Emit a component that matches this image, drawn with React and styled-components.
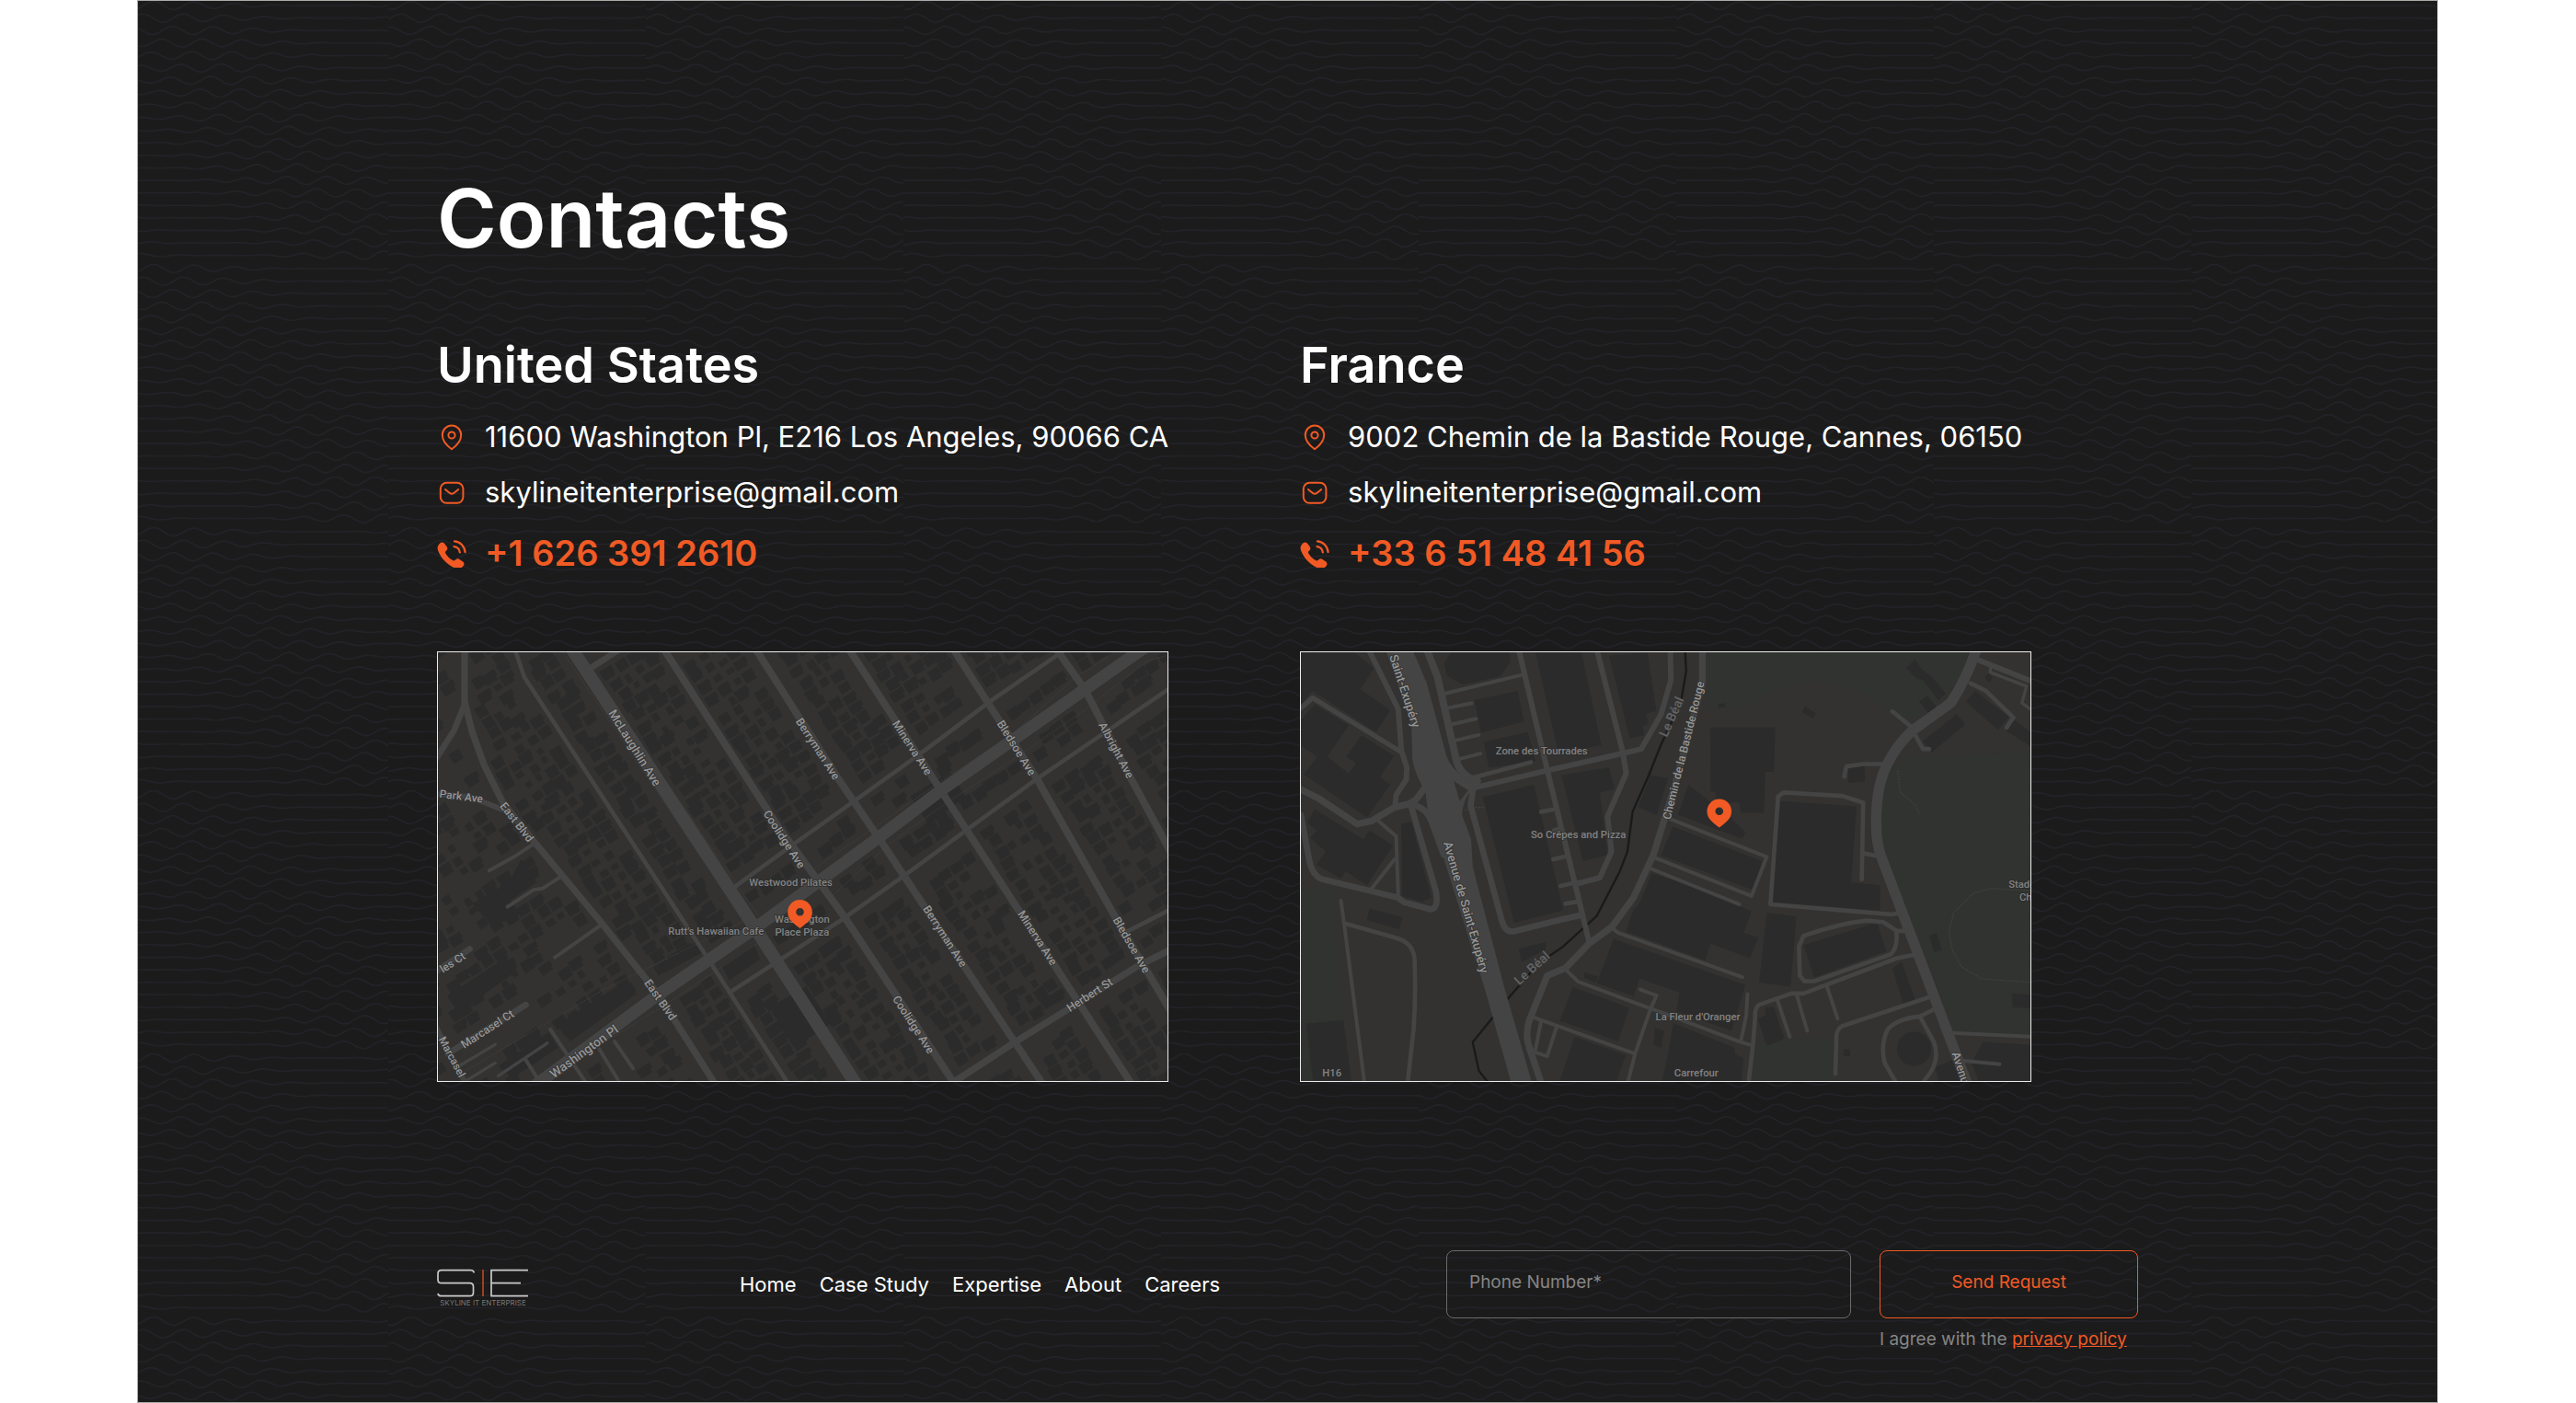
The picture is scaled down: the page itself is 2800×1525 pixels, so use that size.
import React from 'react'
import styled, { createGlobalStyle, ThemeProvider } from 'styled-components';

const theme = {
    colors: {
        background: '#1b1b1b',
        wave: '#222228',
        white: '#ffffff',
        accent: '#f15a24',
        muted: '#858585',
        border: '#6a6a6a',
        land: '#333230',
        building: '#2b2b2b',
        park: '#30332f',
        road: '#444444',
        water: '#191a1a',
    }
}

// one repeatable tile of the wavy backdrop
const TILE_W = 280;
const TILE_H = 286;

const waveTile = () => {
    let d = '';
    for (let row = 0; row < 21; row++) {
        const base = 5 + row * 13.58;
        const center = 26 + row * 12.6;
        const peak = 25 - row * 11.7;
        for (let x = 0; x <= TILE_W; x += 4) {
            const amp = 4.6 * Math.cos(Math.PI * (x - center) / 360) ** 2;
            const y = base - amp * Math.cos(2 * Math.PI * (x - peak) / 44);
            d += `${x === 0 ? 'M' : 'L'}${x} ${y.toFixed(1)}`;
        }
    }
    const svg = `<svg xmlns="http://www.w3.org/2000/svg" width="${TILE_W}" height="${TILE_H}"><path d="${d}" fill="none" stroke="${theme.colors.wave}" stroke-width="1.6"/></svg>`;
    return `url("data:image/svg+xml,${encodeURIComponent(svg)}")`;
}

const WAVES = waveTile();

/* ---------- United States map ---------- */

const usRoads = [
    { w: 42, p: [[450, 10], [1060, 940], [1390, 1450]] },
    { w: 14, p: [[266, 10], [300, 110], [900, 1030], [1170, 1450]] },
    { w: 24, p: [[750, 10], [1130, 600], [1270, 790], [1350, 900], [1712, 1450]] },
    { w: 24, p: [[1050, 10], [1330, 450], [1460, 640], [1900, 1300], [2000, 1450]] },
    { w: 24, p: [[1354, 10], [1660, 480], [2290, 1450]] },
    { w: 24, p: [[1695, 10], [1975, 445], [2250, 930], [2410, 1200]] },
    { w: 24, p: [[2030, 10], [2130, 150], [2280, 440], [2410, 680]] },
    { w: 40, p: [[2330, 10], [1660, 480], [1455, 635], [1060, 925], [740, 1145], [340, 1440]] },
    { w: 14, p: [[2060, 25], [1820, 190], [1580, 370], [1370, 520], [1180, 655], [980, 800]] },
    { w: 14, p: [[2410, 145], [1970, 445], [1750, 605], [1545, 755], [1340, 900], [970, 1140]] },
    { w: 22, p: [[2410, 1000], [2300, 1055], [1905, 1300], [1690, 1440]] },
    { w: 14, p: [[2250, 950], [2410, 868]] },
    { w: 20, p: [[510, 85], [610, 20]] },
    { w: 22, p: [[105, 10], [105, 190], [130, 290], [170, 400], [230, 520], [330, 645], [430, 765], [550, 910], [740, 1150], [930, 1450]] },
    { w: 20, p: [[105, 200], [70, 285], [10, 380]] },
    { w: 18, p: [[10, 492], [120, 500], [235, 545]] },
    { w: 12, p: [[185, 742], [270, 695], [330, 655]] },
    { w: 12, p: [[245, 860], [330, 805], [360, 800], [425, 758]] },
    { w: 12, p: [[400, 1025], [550, 920]] },
    { w: 20, p: [[10, 1072], [122, 998]] },
    { w: 20, p: [[50, 1340], [305, 1180]] },
    { w: 18, p: [[10, 1250], [115, 1450]] },
    { w: 10, p: [[90, 1378], [205, 1310]] },
    { w: 10, p: [[110, 1428], [205, 1370]] },
    { w: 10, p: [[215, 1412], [375, 1305]] },
    { w: 12, p: [[305, 1360], [355, 1440]] },
    { w: 12, p: [[385, 1260], [505, 1440]] },
    { w: 12, p: [[545, 1325], [615, 1440]] },
    { w: 12, p: [[595, 1300], [655, 1388]] },
];

const usPaths = [
    'M425 27L1030 925M510 85L1065 890M1090 975L1400 1440',
    'M100 1400L560 1130L1030 900M340 1440L760 1180L1060 980',
    'M1240 740L1430 610L1660 450L1890 300L2100 110L2210 40',
    'M1300 830L1490 655L1680 520L1910 370L2140 210L2330 60L2395 40',
];

const usBlocks = [
    '130,850 250,780 290,705 340,780 255,840 280,880 200,928',
    '48,1152 240,1025 275,1070 85,1205',
    '408,1245 635,1100 665,1145 450,1300',
    '740,1050 860,975 880,1010 760,1075',
    '945,1055 1050,985 1070,1030 970,1100',
    '215,1380 380,1270 410,1320 260,1420',
    '1100,1190 1180,1320 1300,1240 1220,1120',
    '1620,590 1560,500 1690,420 1740,500',
];

const usLabels = [
    ['McLaughlin Ave', 659, 342, 58, 40],
    ['Park Ave', 94, 500, 7, 36],
    ['East Blvd', 275, 584, 52, 37],
    ['East Blvd', 744, 1164, 55, 37],
    ['les Ct', 66, 1042, -33, 36],
    ['Marcasel Ct', 180, 1260, -33, 37],
    ['Marcasel', 64, 1350, 62, 35],
    ['Washington Pl', 496, 1334, -36, 41],
    ['Coolidge Ave', 1148, 640, 57, 37],
    ['Berryman Ave', 1258, 345, 57, 37],
    ['Minerva Ave', 1566, 341, 57, 37],
    ['Bledsoe Ave', 1906, 342, 58, 37],
    ['Albright Ave', 2232, 349, 62, 37],
    ['Berryman Ave', 1673, 957, 57, 37],
    ['Minerva Ave', 1975, 962, 57, 37],
    ['Bledsoe Ave', 2282, 985, 60, 37],
    ['Coolidge Ave', 1570, 1245, 57, 37],
    ['Herbert St', 2146, 1148, -33, 37],
];

const usPlaces = [
    ['Westwood Pilates', 1170, 791],
    ["Rutt's Hawaiian Cafe", 926, 952],
    ['Washington', 1207, 912],
    ['Place Plaza', 1207, 954],
];

// distance from a point to the edge of the nearest road
const roadGap = (x, y) => {
    let best = Infinity;
    usRoads.forEach(({ w, p }) => {
        for (let i = 1; i < p.length; i++) {
            const [ax, ay] = p[i - 1];
            const [bx, by] = p[i];
            const dx = bx - ax;
            const dy = by - ay;
            const t = Math.max(0, Math.min(1, ((x - ax) * dx + (y - ay) * dy) / (dx * dx + dy * dy)));
            best = Math.min(best, Math.hypot(x - ax - t * dx, y - ay - t * dy) - w / 2);
        }
    });
    return best;
}

const makeHouses = () => {
    let seed = 7;
    const rnd = () => {
        seed = (seed * 16807) % 2147483647;
        return seed / 2147483647;
    };
    const a = 57 * Math.PI / 180;
    let d = '';
    for (let v = -1500; v < 2100; v += 47) {
        for (let u = -100; u < 2700; u += 41) {
            const ju = u + rnd() * 14;
            const jv = v + rnd() * 14;
            const x = ju * Math.cos(a) + jv * Math.sin(a);
            const y = ju * Math.sin(a) - jv * Math.cos(a);
            const size = rnd();
            const notch = rnd();
            const skip = rnd();
            if (x < 0 || x > 2420 || y < 10 || y > 1450) continue;
            const gap = roadGap(x, y);
            const west = y > 1.35 * x + 300 || x < 180;
            if (gap < 30 || skip < (west ? 0.35 : 0.07)) continue;
            const small = gap > 75 && size < 0.7;
            const hu = small ? 9 + size * 8 : 15 + size * 4;
            const hv = small ? 9 + notch * 8 : 18 + notch * 7;
            const pt = (pu, pv) => `${(x + pu * Math.cos(a) + pv * Math.sin(a)).toFixed(0)} ${(y + pu * Math.sin(a) - pv * Math.cos(a)).toFixed(0)}`;
            const cut = small ? 0 : notch * 9;
            d += `M${pt(-hu, -hv)}L${pt(hu, -hv)}L${pt(hu, hv - cut)}L${pt(hu * 0.2, hv - cut)}L${pt(hu * 0.2, hv)}L${pt(-hu, hv)}Z`;
        }
    }
    return d;
}

const HOUSES = makeHouses();

/* ---------- France map ---------- */

const frParks = [
    '24,800 135,800 150,1060 160,1240 40,1240 60,1440 24,1440',
    '1345,27 2200,27 2180,110 2120,190 2040,250 1960,225 1830,150 1720,122 1600,140 1480,205 1345,220',
    '2010,370 2406,355 2406,1285 2155,1270 2060,1010 1960,760 1905,600 1915,480 1960,400',
    '1500,1320 1560,1290 1770,1290 1770,1440 1490,1440',
];

const frBuildings = [
    '24,27 195,27 262,82 218,150 316,218 270,290 62,155 24,200',
    '70,200 180,268 110,370 180,425 205,390 172,370 222,300 328,368 282,438 316,462 240,568 33,428 78,370 24,335 24,250',
    '70,542 228,640 248,610 325,660 240,790 170,745 155,768 75,722 105,680 55,635 75,610 45,585',
    '352,590 385,583 450,830 420,845 355,825',
    '248,865 356,895 345,933 240,903',
    '42,1242 163,1230 190,1440 65,1440',
    '515,27 705,27 708,60 675,108 550,135 500,105 492,65',
    '590,185 732,155 752,255 612,292',
    '620,322 765,290 790,385 638,405',
    '790,30 940,30 1005,332 865,360',
    '1030,40 1155,30 1185,220 1150,230 1160,262 1140,270 1145,300 1098,310',
    '618,502 785,462 880,872 720,912',
    '875,430 1030,405 1048,475 1000,488 1025,690 945,712',
    '1165,430 1223,440 1185,560 1125,535',
    '735,997 825,975 822,1000 745,1040',
    '912,1122 1096,1190 1060,1300 870,1232',
    '918,1285 1085,1345 1050,1440 865,1440',
    '1045,965 1475,1115 1430,1265 1250,1200 1260,1140 1130,1095 1110,1152 990,1110',
    '950,1075 993,1088 985,1108 950,1092',
    '1170,750 1290,790 1495,875 1470,945 1518,960 1490,1028 1360,980 1345,1035 1085,940 1110,868 1130,850',
    '1238,598 1530,712 1500,805 1200,692',
    '1290,462 1370,525 1430,570 1475,618 1465,638 1255,560',
    '1360,275 1573,275 1568,420 1540,420 1536,553 1460,553 1455,520 1380,520 1378,485 1362,485',
    '1590,515 1838,532 1820,780 1915,790 1915,872 1560,845',
    '1545,880 1642,892 1622,1120 1520,1108',
    '1665,985 1905,912 1935,1005 1700,1090',
    '1810,405 1865,400 1865,452 1812,456',
    '1670,205 1706,230 1695,245 1660,225',
    '2000,80 2030,52 2050,85 2085,110 2130,165 2105,185 2055,120 2035,115',
    '2042,190 2070,172 2105,215 2080,235',
    '2055,320 2165,230 2193,265 2085,355',
    '2195,190 2225,155 2335,240 2300,283',
    '2345,245 2406,290 2406,335 2325,285',
    '2258,105 2270,98 2283,112 2275,125 2260,120',
    '2075,955 2100,945 2116,1000 2092,1008',
    '1955,1060 1985,1040 2030,1165 1990,1175',
    '2345,1143 2406,1148 2406,1192 2348,1188',
    '2250,1302 2406,1310 2406,1440 2240,1440 2215,1370',
    '2095,1385 2150,1360 2190,1440 2110,1440',
    '1515,1225 1540,1215 1540,1190 1568,1188 1602,1290 1545,1315',
    '1240,1240 1440,1320 1440,1340 1470,1355 1460,1440 1200,1440 1215,1380',
    '1795,1325 1817,1325 1817,1348 1797,1348',
    '1385,200 1410,195 1408,208 1390,210',
    '1180,1255 1210,1265 1200,1320 1175,1310',
];

const frRoads = [
    { w: 18, d: 'M245 20L342 215L352 350L370 405L368 445L335 495L332 530' },
    { w: 16, d: 'M20 215L62 178L352 355' },
    { w: 22, d: 'M20 475L80 505L208 590L255 580L330 535L375 525L400 510L430 470' },
    { w: 20, d: 'M375 525Q430 530 450 580L490 690' },
    { w: 20, d: 'M385 535L465 810Q475 870 445 868L360 845L340 830L95 770Q60 760 50 700L24 560' },
    { w: 12, d: 'M275 578L335 630L342 825M330 705L255 800' },
    { w: 12, d: 'M155 840L175 990L232 1440' },
    { w: 14, d: 'M170 915L330 960Q390 975 395 1030Q400 1150 392 1260L372 1440' },
    { w: 24, d: 'M435 20L470 110L530 375Q540 430 600 450' },
    { w: 12, d: 'M490 165L745 103M500 212L582 195M515 265L596 246M527 317L605 299M540 378L610 360' },
    { w: 14, d: 'M580 440L775 388' },
    { w: 18, d: 'M735 20L830 420L925 810L965 975' },
    { w: 18, d: 'M575 475L830 415L1080 358L1135 345L1200 232L1232 120L1230 20' },
    { w: 18, d: 'M990 20L1075 355L1086 425L1025 565L1038 680L1000 765L925 785' },
    { w: 14, d: 'M808 550L850 542M850 610L865 606M848 705L885 697M872 792L925 780M888 850L935 842' },
    { w: 20, d: 'M590 450L578 530L680 905Q690 945 720 940L890 898L935 888' },
    { w: 22, d: 'M1335 20L1335 130L1240 480L1175 690L1110 830L1040 925L965 980L888 1060' },
    { w: 22, d: 'M888 1060L828 1085L770 1230Q755 1280 770 1320L810 1440' },
    { w: 12, d: 'M888 1065L930 1105L1165 1192L1200 1205L1455 1300L1495 1312' },
    { w: 12, d: 'M1040 930L1060 945L1465 1090M1165 735L1455 852M1180 700L1495 825L1545 697L1225 572' },
    { w: 12, d: 'M780 1220L1115 1340M808 1235L788 1335L828 1348L858 1255M1090 1440L1115 1340L1165 1195L1185 1150L1132 1130' },
    { w: 14, d: 'M1855 770L1860 520L1790 498L1600 487L1582 500L1557 852L1950 885L1985 880M1860 685L1910 695' },
    { w: 34, d: 'M2230 20Q2190 130 2145 195L2020 285Q1915 385 1905 520Q1895 640 1920 700L2200 1440' },
    { w: 14, d: 'M1798 435L1805 402L1860 394L1935 394M1955 222L2020 275M2030 300L2055 345L2075 345' },
    { w: 14, d: 'M2210 130L2260 155L2350 242L2328 275' },
    { w: 18, d: 'M2225 50L2406 122' },
    { w: 10, d: 'M2275 80L2275 95L2393 140L2378 195L2406 215' },
    { w: 14, d: 'M2000 940L1968 938L1925 910L1870 905Q1780 915 1665 955L1650 990L1653 1085L1668 1103L1700 1103L1950 1015Q1975 990 1967 938' },
    { w: 14, d: 'M2035 1015L1970 1028L1665 1143L1625 1143L1520 1180Q1505 1190 1507 1220L1500 1310L1485 1440' },
    { w: 12, d: 'M1482 1145L1478 1215L1460 1300M1578 1160L1620 1285M1642 1145L1677 1265M1740 1115L1776 1225' },
    { w: 14, d: 'M2090 1150L1790 1250Q1770 1260 1772 1300L1769 1405' },
    { w: 14, d: 'M2100 1190L2045 1218Q1970 1225 1940 1260Q1915 1310 1930 1370L1965 1430M2045 1218L2090 1300Q2110 1350 2080 1400L2050 1440' },
    { w: 12, d: 'M2150 1272L2406 1284M2180 1362L2305 1374' },
];

const frLabels = [
    ['Saint-Exupéry', 362, 156, 72, 40],
    ['Avenue de Saint-Exupéry', 562, 862, 74, 40],
    ['Chemin de la Bastide Rouge', 1274, 350, -76, 37],
    ['Avenue', 2180, 1395, 72, 38],
];

const frWater = [
    ['Le Béal', 780, 1062, -42, 42],
    ['Le Béal', 1236, 241, -66, 42],
];

const frPlaces = [
    ['Zone des Tourrades', 810, 364],
    ['So Crêpes and Pizza', 930, 637],
    ["La Fleur d'Oranger", 1320, 1230],
    ['Carrefour', 1315, 1413],
    ['H16', 125, 1413],
    ['Stade', 2378, 797],
    ['Ch', 2390, 839],
];

const Labels = ({ items, tone }) => items.map(([text, x, y, angle, size]) => (
    <StreetName key={text + x} $tone={tone} $size={size} transform={`translate(${x} ${y}) rotate(${angle})`} dy="12">
        {text}
    </StreetName>
));

const Places = ({ items }) => items.map(([text, x, y]) => (
    <PlaceName key={text + x} x={x} y={y}>{text}</PlaceName>
));

const Marker = ({ x, y }) => (
    <path
        transform={`translate(${x} ${y})`}
        fill={theme.colors.accent}
        fillRule="evenodd"
        d="M0 -40C-23 -40 -40 -22 -40 0C-40 24 -22 37 0 53C22 37 40 24 40 0C40 -22 23 -40 0 -40ZM0 -13A13 13 0 1 1 0 13A13 13 0 1 1 0 -13Z"
    />
);

const UsMap = () => (
    <MapFrame viewBox="18 27 2382 1404" preserveAspectRatio="xMidYMid slice" role="img" aria-label="Map of Los Angeles office">
        <g fill={theme.colors.building}>
            <path d={HOUSES} />
            {usBlocks.map(points => <polygon key={points} points={points} />)}
        </g>
        <g fill="none" stroke="#403f3d" strokeWidth="3" strokeDasharray="5 4">
            {usPaths.map(d => <path key={d} d={d} />)}
        </g>
        <g fill="none" stroke={theme.colors.road} strokeLinejoin="round" strokeLinecap="round">
            {usRoads.map(({ w, p }) => <polyline key={p[0].join()} points={p.join(' ')} strokeWidth={w} />)}
        </g>
        <Labels items={usLabels} tone="#969696" />
        <Places items={usPlaces} />
        <Marker x={1200} y={877} />
    </MapFrame>
);

const FranceMap = () => (
    <MapFrame viewBox="24 27 2382 1404" preserveAspectRatio="xMidYMid slice" role="img" aria-label="Map of Cannes office">
        <g fill={theme.colors.park}>
            {frParks.map(points => <polygon key={points} points={points} />)}
        </g>
        <g fill={theme.colors.building}>
            {frBuildings.map(points => <polygon key={points} points={points} />)}
            <circle cx="2026" cy="1324" r="56" />
        </g>
        <path d="M1278 20L1282 90L1265 190L1200 330L1160 430L1107 550L1090 680L1065 745L990 890L880 990L800 1045L700 1160L585 1302L605 1395L640 1440" fill="none" stroke={theme.colors.water} strokeWidth="7" />
        <g fill="none" stroke={theme.colors.road} strokeLinejoin="round" strokeLinecap="round">
            {frRoads.map(({ w, d }) => <path key={d} d={d} strokeWidth={w} />)}
        </g>
        <path fill={theme.colors.road} d="M300 20L388 20L435 130L500 370Q520 420 590 460L585 480Q555 500 550 560L580 640L585 730L690 1130L780 1440L712 1440L625 1130L490 700L440 560L430 480Q400 440 388 380L385 270L340 130Z" />
        <path fill={theme.colors.land} d="M523 450L570 480L543 515Z" />
        <g fill="none" stroke="#42423f" strokeWidth="4" strokeDasharray="5 4">
            <path d="M2406 807L2280 800L2220 815L2155 880L2140 940L2150 1000L2180 1055L2245 1095L2406 1107" />
            <path d="M1973 415L1980 485L2030 528L2043 558" />
            <path d="M560 545L580 536L625 536" />
        </g>
        <Labels items={frWater} tone="#646464" />
        <Labels items={frLabels} tone="#969696" />
        <Places items={frPlaces} />
        <Marker x={1390} y={548} />
    </MapFrame>
);

const PinIcon = () => (
    <Icon viewBox="0 0 32 32" aria-hidden="true">
        <path d="M16 29.2C13.4 27.4 5.8 21.4 5.8 13.8A10.2 10.4 0 0 1 26.2 13.8C26.2 21.4 18.6 27.4 16 29.2Z" />
        <circle cx="16" cy="14" r="3.6" />
    </Icon>
);

const MailIcon = () => (
    <Icon viewBox="0 0 32 32" aria-hidden="true">
        <rect x="3.8" y="5.800" width="24.6" height="22" rx="6.5" />
        <path d="M9 13L13.6 16.8Q16.1 18.8 18.6 16.8L23.2 13" />
    </Icon>
);

const PhoneIcon = () => (
    <Icon viewBox="0 -2 32 32" aria-hidden="true">
        <path
            fill={theme.colors.accent}
            stroke="none"
            d="M3.2 3.6C4.7 2 6.6 2 7.9 3.6L10.7 7.3C11.7 8.7 11.5 10.2 10.3 11.4L9.4 12.3C8.8 13 8.9 13.7 9.3 14.4C11.1 17.5 14.2 20.5 17.4 22.3C18.2 22.7 18.9 22.7 19.5 22.1L20.4 21.2C21.7 20 23.2 19.9 24.5 20.9L28.2 23.6C29.8 24.8 29.9 26.7 28.5 28.2L26.9 29.9C25.2 31.5 22.7 31.8 20.2 30.8C11.9 27.4 4.6 20.2 1.3 11.9C0.2 9.1 0.3 6.8 1.9 5Z"
        />
        <path d="M19 1.4C25.2 1.8 30 6.7 30.5 13" strokeWidth="2.3" />
        <path d="M18.6 7.2C22 7.6 24.3 9.9 24.8 13.3" strokeWidth="2.3" />
    </Icon>
);

const Logo = () => (
    <LogoLink href="#home" aria-label="Skyline IT Enterprise">
        <LogoArt viewBox="0 0 100 50">
            <g fill="none" stroke="#c9c9c9" strokeWidth="1.7">
                <path d="M40 12.5V11.5Q39 9.7 36.5 9.7H5Q1 9.7 1 13.5V20Q1 23.7 5 23.7H35.5Q39.5 23.7 39.5 27.5V34Q39.5 37.7 35.5 37.7H4.5Q1.5 37.7 1 35" />
                <path d="M99 9.7H59V37.7H99M59 23.7H91" />
            </g>
            <path d="M50 9V38" stroke={theme.colors.accent} strokeWidth="1.2" />
            <LogoText x="50" y="48">SKYLINE IT ENTERPRISE</LogoText>
        </LogoArt>
    </LogoLink>
);

const offices = [
    {
        country: 'United States',
        address: '11600 Washington Pl, E216 Los Angeles, 90066 CA',
        email: 'skylineitenterprise@gmail.com',
        phone: '+1 626 391 2610',
        Map: UsMap,
    },
    {
        country: 'France',
        address: '9002 Chemin de la Bastide Rouge, Cannes, 06150',
        email: 'skylineitenterprise@gmail.com',
        phone: '+33 6 51 48 41 56',
        Map: FranceMap,
    },
];

const links = ['Home', 'Case Study', 'Expertise', 'About', 'Careers'];

const Office = ({ country, address, email, phone, Map }) => (
    <OfficeWrapper>
        <Country>{country}</Country>
        <Details>
            <Row><PinIcon /><span>{address}</span></Row>
            <Row><MailIcon /><a href={`mailto:${email}`}>{email}</a></Row>
            <PhoneRow><PhoneIcon /><a href={`tel:${phone.replace(/ /g, '')}`}>{phone}</a></PhoneRow>
        </Details>
        <Map />
    </OfficeWrapper>
);

const App = () => {
    return(
        <ThemeProvider theme={theme}>
            <GlobalStyle />
            <Page>
                <Section>
                    <Title>Contacts</Title>

                    <Offices>
                        {offices.map(office => <Office key={office.country} {...office} />)}
                    </Offices>

                    <Footer>
                        <Logo />
                        <Nav>
                            {links.map(link => (
                                <NavLink key={link} href={`#${link.toLowerCase().replace(' ', '-')}`}>{link}</NavLink>
                            ))}
                        </Nav>
                        <Form onSubmit={e => e.preventDefault()}>
                            <PhoneInput type="tel" placeholder="Phone Number*" aria-label="Phone Number" />
                            <SendButton type="submit">Send Request</SendButton>
                            <Agreement>I agree with the <a href="#privacy">privacy policy</a></Agreement>
                        </Form>
                    </Footer>
                </Section>
            </Page>
        </ThemeProvider>
    )
}

const GlobalStyle = createGlobalStyle`
    * {
        box-sizing: border-box;
    }
    body {
        margin: 0;
        background: #ffffff;
        font-family: Inter, "Liberation Sans", sans-serif;
    }
    a {
        color: inherit;
        text-decoration: none;
    }
`

const Page = styled.div`
    display: flex;
    justify-content: center;
    padding: 0 150px 0 149px;
`

const Section = styled.section`
    flex: 1;
    min-width: 0;
    min-height: 100vh;
    padding: 176px 325px 53px;
    border: 1px solid #a9aca9;
    color: ${ props => props.theme.colors.white };
    background-color: ${ props => props.theme.colors.background };
    background-image: ${WAVES};
    background-position: -8px 0;
`

const Title = styled.h1`
    margin: 0 0 64px;
    font-size: 88px;
    line-height: 120px;
    font-weight: 600;
`

const Offices = styled.div`
    display: grid;
    grid-template-columns: 43% 43%;
    column-gap: 143px;
`

const OfficeWrapper = styled.article`
    display: flex;
    flex-direction: column;
    min-width: 0;
`

const Country = styled.h2`
    margin: 0 0 18px;
    font-size: 54px;
    line-height: 72px;
    font-weight: 600;
`

const Details = styled.div`
    display: flex;
    flex-direction: column;
    gap: 12px;
    margin-bottom: 77px;
`

const Row = styled.div`
    display: flex;
    align-items: center;
    gap: 20px;
    font-size: 31px;
    line-height: 48px;
    white-space: nowrap;
`

const PhoneRow = styled(Row)`
    font-size: 38px;
    line-height: 60px;
    font-weight: 600;
    color: ${ props => props.theme.colors.accent };
`

const Icon = styled.svg`
    flex: none;
    width: 32px;
    height: 32px;
    fill: none;
    stroke: ${ props => props.theme.colors.accent };
    stroke-width: 2;
    stroke-linecap: round;
    stroke-linejoin: round;
`

const MapFrame = styled.svg`
    display: block;
    width: 100%;
    height: 468px;
    border: 1px solid #ececec;
    background: ${ props => props.theme.colors.land };
`

const StreetName = styled.text`
    font-family: Roboto, sans-serif;
    font-size: ${ props => props.$size }px;
    font-weight: 500;
    text-anchor: middle;
    fill: ${ props => props.$tone };
    stroke: #333333;
    stroke-width: 5px;
    paint-order: stroke;
`

const PlaceName = styled.text`
    font-family: Roboto, sans-serif;
    font-size: 34px;
    font-weight: 500;
    text-anchor: middle;
    fill: #828282;
    stroke: #2d2d2d;
    stroke-width: 4px;
    paint-order: stroke;
`

const Footer = styled.footer`
    display: flex;
    align-items: flex-start;
    margin-top: 183px;
`

const LogoLink = styled.a`
    display: flex;
    align-items: center;
    height: 74px;
`

const LogoArt = styled.svg`
    width: 100px;
    height: 50px;
`

const LogoText = styled.text`
    font-family: Inter, sans-serif;
    font-size: 8px;
    text-anchor: middle;
    fill: #777777;
`

const Nav = styled.nav`
    display: flex;
    align-items: center;
    gap: 25px;
    height: 74px;
    margin-left: 229px;
`

const NavLink = styled.a`
    font-size: 22px;
    line-height: 32px;
`

const Form = styled.form`
    display: grid;
    grid-template-columns: 440px 281px;
    column-gap: 31px;
    row-gap: 9px;
    margin-left: auto;
`

const PhoneInput = styled.input`
    height: 74px;
    padding: 0 24px 5px;
    border: 1px solid ${ props => props.theme.colors.border };
    border-radius: 8px;
    outline: none;
    background: transparent;
    color: ${ props => props.theme.colors.white };
    font-family: inherit;
    font-size: 19px;
    &::placeholder {
        color: ${ props => props.theme.colors.muted };
        opacity: 1;
    }
`

const SendButton = styled.button`
    height: 74px;
    padding: 0 0 5px;
    border: 1px solid ${ props => props.theme.colors.accent };
    border-radius: 8px;
    background: transparent;
    color: ${ props => props.theme.colors.accent };
    font-family: inherit;
    font-size: 19px;
    cursor: pointer;
`

const Agreement = styled.p`
    grid-column: 2;
    margin: 0;
    font-size: 19px;
    line-height: 28px;
    color: ${ props => props.theme.colors.muted };
    white-space: nowrap;

    a {
        color: ${ props => props.theme.colors.accent };
        text-decoration: underline;
    }
`

export default App
